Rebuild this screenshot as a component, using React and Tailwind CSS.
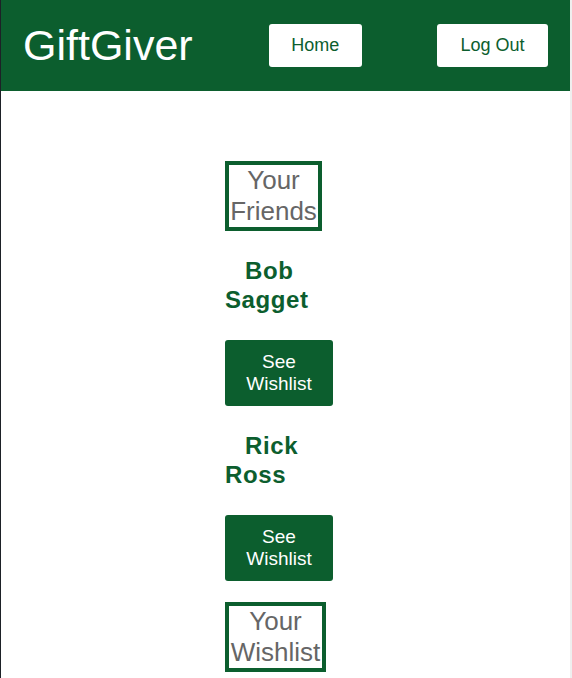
const friends = [
  { id: 1, name: "Bob Sagget" },
  { id: 2, name: "Rick Ross" },
];

const App = () => {
  return (
    <div className="flex min-h-[678px] font-['Liberation_Sans',Arial,sans-serif]">
      <div className="w-px bg-[#1d2127]"></div>
      <div className="flex-1 bg-white">
        <nav className="h-[91px] bg-[#0c5e2e] flex items-center justify-between pl-[22px] pr-[22px]">
          <h1 className="text-white text-[43px] leading-none">GiftGiver</h1>
          <button className="ml-[1px] bg-white text-[#0c5e2e] text-[18px] rounded-[3px] h-[43px] w-[93px]">
            Home
          </button>
          <button className="bg-white text-[#0c5e2e] text-[18px] rounded-[3px] h-[43px] w-[111px]">
            Log Out
          </button>
        </nav>
        <div className="pl-[224px] flex flex-col items-start pt-[70px]">
          <h2 className="w-[97px] border-4 border-[#0c5e2e] text-[#666] text-[26px] leading-[31px] text-center">
            Your Friends
          </h2>
          {friends.map((friend) => (
            <div key={friend.id} className="flex flex-col items-start">
              <h3 className="mt-[25px] w-[88px] indent-[20px] text-[#0c5e2e] font-bold text-[24px] leading-[29px] tracking-[0.6px]">
                {friend.name}
              </h3>
              <button className="mt-[26px] w-[108px] px-[10px] py-[11px] bg-[#0c5e2e] text-white text-[19px] leading-[22px] rounded-[3px]">
                See Wishlist
              </button>
            </div>
          ))}
          <h2 className="mt-[21px] w-[101px] border-4 border-[#0c5e2e] text-[#666] text-[26px] leading-[31px] text-center">
            Your Wishlist
          </h2>
        </div>
      </div>
      <div className="w-[2px] bg-[#efefef]"></div>
    </div>
  );
};

export default App;
